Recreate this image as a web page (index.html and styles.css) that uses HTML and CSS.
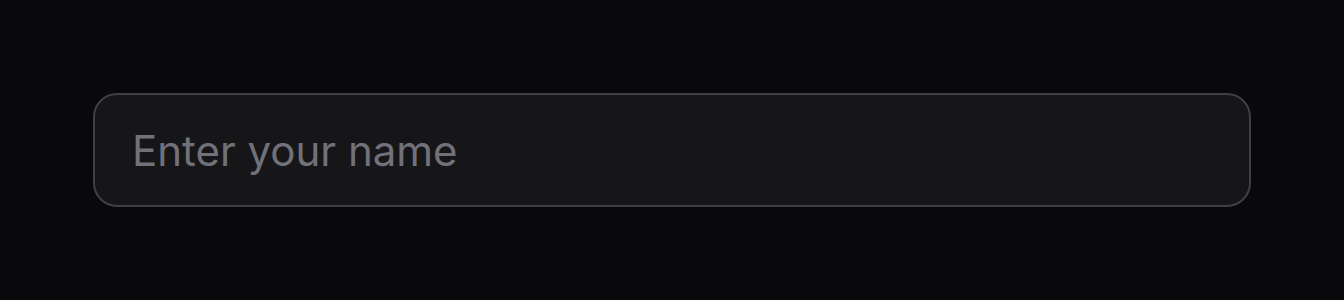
FILE: index.html
```html
<!DOCTYPE html>
<html lang="en">
<head>
  <meta charset="UTF-8" />
  <title>Name input</title>
  <meta name="viewport" content="width=device-width, initial-scale=1.0" />
  <link rel="stylesheet" href="styles.css">
</head>
<body>
  <div class="field">
    <input type="text" id="name" class="name-input" placeholder="Enter your name" />
  </div>
</body>
</html>
```

FILE: styles.css
```css
:root {
  --bg: #09090b;
  --box: #161619;
  --border: #3f3f46;
  --muted: #71717a;
  --text: #fafafa;
}

* {
  box-sizing: border-box;
}

body {
  margin: 0;
  height: 300px;
  background: var(--bg);
  font-family: 'Inter', 'Noto Sans', sans-serif;
  display: flex;
  align-items: center;
  padding: 0 93px;
}

.field {
  width: 100%;
}

.name-input {
  display: block;
  width: 100%;
  height: 114px;
  padding: 0 37px;
  font-family: inherit;
  font-size: 42px;
  color: var(--text);
  background: var(--box);
  border: 2px solid var(--border);
  border-radius: 24px;
  outline: none;
}

.name-input::placeholder {
  color: var(--muted);
}
```
